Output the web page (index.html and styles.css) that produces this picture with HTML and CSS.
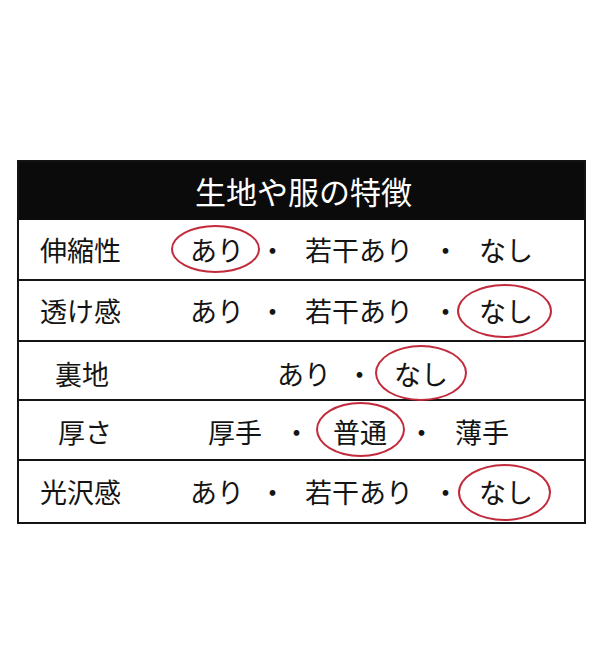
FILE: index.html
```html
<!DOCTYPE html>
<html lang="ja">
<head>
<meta charset="utf-8">
<title>生地や服の特徴</title>
<link rel="stylesheet" href="styles.css">
</head>
<body>
<div class="table">
  <div class="header">生地や服の特徴</div>
  <div class="row row-a row-1">
    <span class="label">伸縮性</span>
    <span class="circled c1">あり</span>
    <span>・</span>
    <span>若干あり</span>
    <span>・</span>
    <span>なし</span>
  </div>
  <div class="row row-a row-2">
    <span class="label">透け感</span>
    <span>あり</span>
    <span>・</span>
    <span>若干あり</span>
    <span>・</span>
    <span class="circled c2">なし</span>
  </div>
  <div class="row row-3">
    <span class="label">裏地</span>
    <span>あり</span>
    <span>・</span>
    <span class="circled c3">なし</span>
  </div>
  <div class="row row-4">
    <span class="label">厚さ</span>
    <span>厚手</span>
    <span>・</span>
    <span class="circled c4">普通</span>
    <span>・</span>
    <span>薄手</span>
  </div>
  <div class="row row-a row-5">
    <span class="label">光沢感</span>
    <span>あり</span>
    <span>・</span>
    <span>若干あり</span>
    <span>・</span>
    <span class="circled c5">なし</span>
  </div>
</div>
</body>
</html>
```

FILE: styles.css
```css
html, body {
  margin: 0;
  padding: 0;
  background: #ffffff;
}

body {
  font-family: "Noto Sans CJK JP", "Noto Sans", sans-serif;
  color: #141414;
}

.table {
  margin: 160px 0 0 17px;
  width: 565px;
  border: 2px solid #141414;
}

.header {
  height: 58px;
  background: #0b0b0b;
  color: #ffffff;
  font-size: 31px;
  line-height: 58px;
  text-align: center;
  padding-left: 4px;
}

.row {
  display: grid;
  align-items: center;
  justify-items: start;
  box-sizing: border-box;
  font-size: 27px;
  line-height: 27px;
  border-top: 2px solid #141414;
}

.row span {
  white-space: nowrap;
}

.row-1 {
  border-top: none;
  height: 59px;
}

.row-2 {
  height: 61px;
}

.row-5 {
  height: 63px;
}

.row-a {
  padding-left: 21px;
  grid-template-columns: 150px 69px 46px 127px 47px auto;
}

.row-3 {
  height: 59px;
  padding-left: 36px;
  padding-top: 5px;
  grid-template-columns: 222px 69px 48px auto;
}

.row-4 {
  height: 60px;
  padding-left: 39px;
  padding-top: 3px;
  grid-template-columns: 150px 75px 50px 75px 47px auto;
}

.circled {
  position: relative;
}

.circled::after {
  content: "";
  position: absolute;
  border: 2px solid #c22b3c;
  border-radius: 50%;
}

.c1::after { inset: -11px -16px -10px -19px; }
.c2::after { inset: -13px -19px -14px -22px; }
.c3::after { inset: -15px -19px -14px -19px; }
.c4::after { inset: -16px -18px -12px -17px; }
.c5::after { inset: -14px -18px -16px -21px; }
```
